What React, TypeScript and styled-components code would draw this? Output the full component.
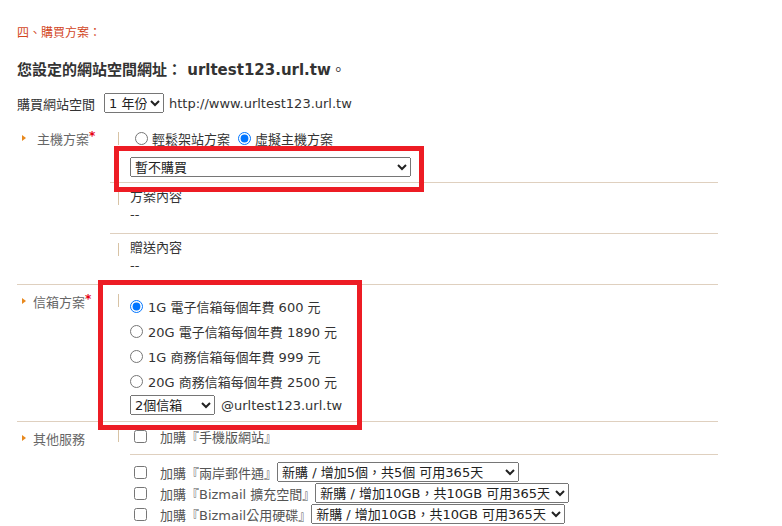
import React from "react";
import styled, { createGlobalStyle } from "styled-components";

const FONT = `"DejaVu Sans", "Noto Sans CJK TC", sans-serif`;

const Global = createGlobalStyle`
  html, body { margin: 0; padding: 0; background: #fff; overflow: hidden; }
  body { font-family: ${FONT}; font-size: 13px; color: #333; }
`;

const Page = styled.div`
  position: relative;
  padding: 24px 0 0 17px;
  width: 701px;
`;

const Title = styled.h2`
  margin: 0;
  font-size: 12px;
  font-weight: normal;
  line-height: 18px;
  color: #d2461e;
`;

const Heading = styled.h1`
  margin: 18px 0 0;
  font-size: 15px;
  font-weight: bold;
  line-height: 20px;
  color: #333;
`;

const Dot = styled.span`
  font-weight: normal;
`;

const SpaceRow = styled.div`
  display: flex;
  align-items: center;
  height: 20px;
  margin-top: 13px;
  color: #333;
`;

const Select = styled.select<{ $w: number; $ml?: number; $mr?: number }>`
  width: ${(p) => p.$w}px;
  height: 20px;
  margin: 0 ${(p) => p.$mr ?? 0}px 0 ${(p) => p.$ml ?? 0}px;
  font-family: ${FONT};
  font-size: 13px;
  color: #222;
  flex: none;
`;

const Table = styled.div`
  margin-top: 12px;
  width: 701px;
`;

const Row = styled.div<{ $line?: boolean }>`
  display: flex;
  border-top: ${(p) => (p.$line ? "1px solid #dfd0bf" : "none")};
`;

const LabelCell = styled.div<{ $pt: number }>`
  flex: none;
  width: 88px;
  padding: ${(p) => p.$pt}px 0 0 5px;
`;

const LabelLine = styled.div`
  display: flex;
  align-items: center;
  height: 18px;
  color: #666;
  white-space: nowrap;
`;

const Bullet = styled.span<{ $gap: number }>`
  flex: none;
  width: 0;
  height: 0;
  border-left: 4px solid #e8891e;
  border-top: 3px solid transparent;
  border-bottom: 3px solid transparent;
  margin: -1px ${(p) => p.$gap}px 0 0;
`;

const Req = styled.span`
  color: #e60012;
  align-self: flex-start;
  font-size: 12px;
  font-weight: bold;
  line-height: 14px;
`;

const ContentCell = styled.div`
  flex: 1;
  display: flex;
  flex-direction: column;
`;

const Section = styled.div<{ $pt: number; $pb: number; $line?: boolean }>`
  display: flex;
  padding: ${(p) => p.$pt}px 0 ${(p) => p.$pb}px 8px;
  border-top: ${(p) => (p.$line ? "1px solid #dfd0bf" : "none")};
`;

const Bar = styled.span<{ $mt: number }>`
  flex: none;
  width: 1px;
  height: 13px;
  background: #d8c3a5;
  margin: ${(p) => p.$mt}px 11px 0 0;
`;

const Body = styled.div`
  flex: 1;
  display: flex;
  flex-direction: column;
  align-items: flex-start;
`;

const RadioLine = styled.div`
  display: flex;
  align-items: center;
  height: 19px;
  color: #333;
  white-space: nowrap;
`;

const Choice = styled.label<{ $ml?: number }>`
  display: flex;
  align-items: center;
  margin-left: ${(p) => p.$ml ?? 0}px;
`;

const Radio = styled.input<{ $ml: number; $mr: number }>`
  width: 13px;
  height: 13px;
  margin: 0 ${(p) => p.$mr}px 0 ${(p) => p.$ml}px;
  flex: none;
`;

const SelectWrap = styled.div<{ $mt: number }>`
  display: flex;
  align-items: center;
  margin-top: ${(p) => p.$mt}px;
  color: #333;
`;

const TextLine = styled.div`
  line-height: 18px;
  color: #333;
`;

const OptionLine = styled.label`
  display: flex;
  align-items: center;
  height: 25px;
  color: #333;
  white-space: nowrap;
`;

const FirstItem = styled.div`
  align-self: stretch;
  display: flex;
  align-items: center;
  height: 19px;
  padding: 5px 0 8px;
  border-bottom: 1px solid #dfd0bf;
  color: #555;
`;

const ItemList = styled.div`
  display: flex;
  flex-direction: column;
  gap: 1px;
  padding-top: 7px;
`;

const Item = styled.label`
  display: flex;
  align-items: center;
  height: 20px;
  color: #555;
  white-space: nowrap;
`;

const Check = styled.input`
  width: 13px;
  height: 13px;
  margin: 0 13px 0 4px;
  flex: none;
`;

const Annotation = styled.div<{ $x: number; $y: number; $w: number; $h: number }>`
  position: absolute;
  left: ${(p) => p.$x}px;
  top: ${(p) => p.$y}px;
  width: ${(p) => p.$w}px;
  height: ${(p) => p.$h}px;
  box-sizing: border-box;
  border: 5px solid #ed1c24;
  pointer-events: none;
`;

const mailPlans = [
  "1G 電子信箱每個年費 600 元",
  "20G 電子信箱每個年費 1890 元",
  "1G 商務信箱每個年費 999 元",
  "20G 商務信箱每個年費 2500 元",
];

const services = [
  { label: "加購『兩岸郵件通』", option: "新購 / 增加5個，共5個 可用365天", w: 242 },
  { label: "加購『Bizmail 擴充空間』", option: "新購 / 增加10GB，共10GB 可用365天", w: 254 },
  { label: "加購『Bizmail公用硬碟』", option: "新購 / 增加10GB，共10GB 可用365天", w: 254 },
];

export default function App() {
  return (
    <>
      <Global />
      <Page>
        <Title>四、購買方案：</Title>
        <Heading>
          您設定的網站空間網址： urltest123.url.tw<Dot>。</Dot>
        </Heading>
        <SpaceRow>
          購買網站空間
          <Select $w={60} $ml={9} $mr={5} defaultValue="1">
            <option value="1">1 年份</option>
            <option value="2">2 年份</option>
          </Select>
          http://www.urltest123.url.tw
        </SpaceRow>

        <Table>
          <Row>
            <LabelCell $pt={4}>
              <LabelLine>
                <Bullet $gap={11} />
                主機方案
                <Req>*</Req>
              </LabelLine>
            </LabelCell>
            <ContentCell>
              <Section $pt={4} $pb={5}>
                <Bar $mt={3} />
                <Body>
                  <RadioLine>
                    <Choice>
                      <Radio type="radio" name="host" $ml={5} $mr={4} />
                      輕鬆架站方案
                    </Choice>
                    <Choice $ml={3}>
                      <Radio type="radio" name="host" defaultChecked $ml={5} $mr={4} />
                      虛擬主機方案
                    </Choice>
                  </RadioLine>
                  <SelectWrap $mt={9}>
                    <Select $w={281} defaultValue="none">
                      <option value="none">暫不購買</option>
                    </Select>
                  </SelectWrap>
                </Body>
              </Section>
              <Section $pt={5} $pb={9} $line>
                <Bar $mt={4} />
                <Body>
                  <TextLine>方案內容</TextLine>
                  <TextLine>--</TextLine>
                </Body>
              </Section>
              <Section $pt={5} $pb={9} $line>
                <Bar $mt={4} />
                <Body>
                  <TextLine>贈送內容</TextLine>
                  <TextLine>--</TextLine>
                </Body>
              </Section>
            </ContentCell>
          </Row>

          <Row $line>
            <LabelCell $pt={7}>
              <LabelLine>
                <Bullet $gap={7} />
                信箱方案
                <Req>*</Req>
              </LabelLine>
            </LabelCell>
            <ContentCell>
              <Section $pt={9} $pb={6}>
                <Bar $mt={0} />
                <Body>
                  {mailPlans.map((plan, i) => (
                    <OptionLine key={plan}>
                      <Radio type="radio" name="mail" defaultChecked={i === 0} $ml={0} $mr={5} />
                      {plan}
                    </OptionLine>
                  ))}
                  <SelectWrap $mt={1}>
                    <Select $w={85} $mr={6} defaultValue="2">
                      <option value="2">2個信箱</option>
                    </Select>
                    @urltest123.url.tw
                  </SelectWrap>
                </Body>
              </Section>
            </ContentCell>
          </Row>

          <Row $line>
            <LabelCell $pt={7}>
              <LabelLine>
                <Bullet $gap={7} />
                其他服務
              </LabelLine>
            </LabelCell>
            <ContentCell>
              <Section $pt={0} $pb={0}>
                <Bar $mt={7} />
                <Body>
                  <FirstItem>
                    <Check type="checkbox" />
                    加購『手機版網站』
                  </FirstItem>
                  <ItemList>
                    {services.map((s) => (
                      <Item key={s.label}>
                        <Check type="checkbox" />
                        {s.label}
                        <Select $w={s.w} defaultValue="a">
                          <option value="a">{s.option}</option>
                        </Select>
                      </Item>
                    ))}
                  </ItemList>
                </Body>
              </Section>
            </ContentCell>
          </Row>
        </Table>

        <Annotation $x={114} $y={146} $w={310} $h={46} />
        <Annotation $x={98} $y={280} $w={264} $h={150} />
      </Page>
    </>
  );
}
